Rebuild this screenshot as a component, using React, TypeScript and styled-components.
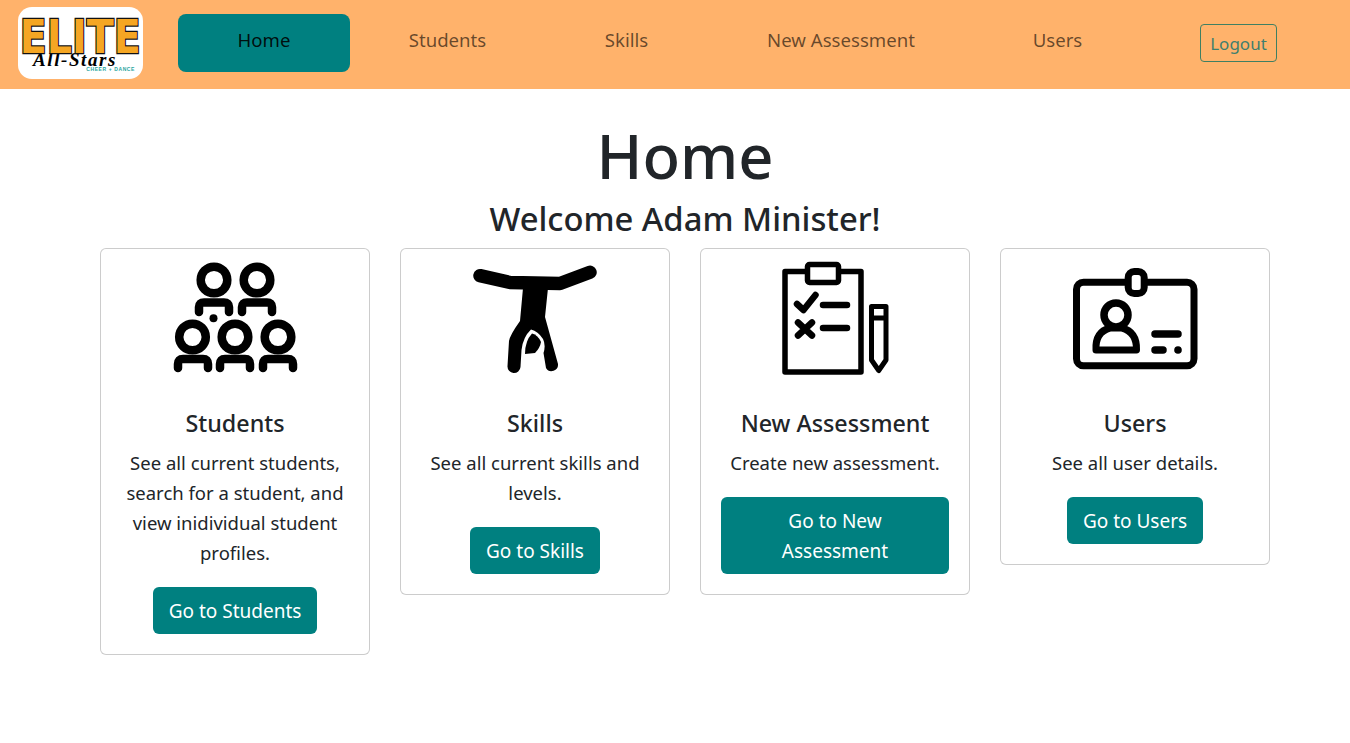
import styled, { createGlobalStyle } from "styled-components";

const GlobalStyle = createGlobalStyle`
  * {
    box-sizing: border-box;
  }

  html, body {
    margin: 0;
    background: #fff;
    font-family: "Noto Sans", "Open Sans", sans-serif;
    color: #212529;
    overflow-x: hidden;
  }
`;

const navLinks = [
  { id: 1, label: "Home", width: 172, active: true },
  { id: 2, label: "Students", width: 195 },
  { id: 3, label: "Skills", width: 163 },
  { id: 4, label: "New Assessment", width: 266 },
  { id: 5, label: "Users", width: 167 },
];

function StudentsIcon() {
  const heads = [[54, 25], [97, 25], [32.5, 82], [75, 82], [118, 82]];
  const bodies = [
    "M39 57V52Q39 47.500 44 47.500H64Q69 47.500 69 52V57",
    "M82 57V52Q82 47.500 87 47.500H107Q112 47.500 112 52V57",
    "M18 113V109Q18 104 23 104H43Q48 104 48 109V113",
    "M60 113V109Q60 104 65 104H85Q90 104 90 109V113",
    "M103 113V109Q103 104 108 104H128Q133 104 133 109V113",
  ];

  return (
    <svg width="150" height="125" viewBox="0 0 150 125" fill="none" stroke="#000" strokeWidth="8.500" strokeLinecap="round">
      {heads.map(([cx, cy]) => (
        <circle key={`${cx}-${cy}`} cx={cx} cy={cy} r="13.300" />
      ))}
      {bodies.map((d) => (
        <path key={d} d={d} />
      ))}
      <circle cx="53.500" cy="63.300" r="4" fill="#000" stroke="none" />
    </svg>
  );
}

function SkillsIcon() {
  return (
    <svg width="150" height="125" viewBox="0 0 150 125" fill="none" stroke="#000" strokeLinecap="round" strokeLinejoin="round">
      <path d="M20 20.700L50 27.500L100 28.500L130 17.300" strokeWidth="13.500" />
      <path
        d="M63 33H88L85 62L98 109A6.500 6.500 0 0 1 86 113L83.500 98Q86 90 83 84Q78 76 71 74.500Q63 82 61.500 95L60.500 112A6.500 6.500 0 0 1 47.500 111L49 86Q50 80 60 66Z"
        fill="#000"
        stroke="none"
      />
      <path d="M72 78.500Q78 80 81 87Q80 93 75 98L65 99Q65 86 72 78.500Z" fill="#000" stroke="none" />
    </svg>
  );
}

function AssessmentIcon() {
  return (
    <svg width="140" height="125" viewBox="0 0 140 125" fill="none" stroke="#000" strokeLinecap="round" strokeLinejoin="round">
      <rect x="20" y="16.500" width="76" height="100.500" strokeWidth="5.500" />
      <rect x="42.500" y="9.500" width="31" height="18" rx="2" fill="#fff" strokeWidth="5.500" />
      <path d="M32 49L38.500 55L50.500 40" strokeWidth="6.500" />
      <path d="M58 50H82M58 73H82M33 67.500L47 80.500M47 67.500L33 80.500" strokeWidth="6.500" />
      <path d="M106.500 51.500H121V105L113.750 115.500L106.500 105ZM106.500 63H121" strokeWidth="5" />
    </svg>
  );
}

function UsersIcon() {
  return (
    <svg width="150" height="125" viewBox="0 0 150 125" fill="none" stroke="#000" strokeLinecap="round" strokeLinejoin="round">
      <rect x="16.500" y="27.200" width="117.500" height="83.600" rx="7" strokeWidth="7" />
      <rect x="68.200" y="16.500" width="16" height="22" rx="6" fill="#fff" strokeWidth="7" />
      <circle cx="56" cy="60" r="12" strokeWidth="7.500" />
      <path d="M36 95Q35 77 50 73H62Q77 77 76.500 95Z" fill="#fff" strokeWidth="7" />
      <path d="M95 79H118M95 95H103" strokeWidth="7.500" />
      <circle cx="118" cy="95" r="3.800" fill="#000" stroke="none" />
    </svg>
  );
}

const cards = [
  {
    id: 1,
    title: "Students",
    text: "See all current students, search for a student, and view inidividual student profiles.",
    action: "Go to Students",
    icon: <StudentsIcon />,
  },
  {
    id: 2,
    title: "Skills",
    text: "See all current skills and levels.",
    action: "Go to Skills",
    icon: <SkillsIcon />,
  },
  {
    id: 3,
    title: "New Assessment",
    text: "Create new assessment.",
    action: "Go to New Assessment",
    icon: <AssessmentIcon />,
  },
  {
    id: 4,
    title: "Users",
    text: "See all user details.",
    action: "Go to Users",
    icon: <UsersIcon />,
  },
];

export default function App() {
  return (
    <>
      <GlobalStyle />
      <Navbar>
        <Logo>
          <LogoElite>ELITE</LogoElite>
          <LogoStars>All-Stars</LogoStars>
          <LogoTag>CHEER + DANCE</LogoTag>
        </Logo>
        <NavList>
          {navLinks.map((link) => (
            <NavLink key={link.id} $width={link.width} $active={link.active}>
              {link.label}
            </NavLink>
          ))}
        </NavList>
        <LogoutButton>Logout</LogoutButton>
      </Navbar>

      <Main>
        <Title>Home</Title>
        <Welcome>Welcome Adam Minister!</Welcome>
        <CardRow>
          {cards.map((card) => (
            <Card key={card.id}>
              <IconFrame>{card.icon}</IconFrame>
              <CardBody>
                <CardTitle>{card.title}</CardTitle>
                <CardText>{card.text}</CardText>
                <CardButton>{card.action}</CardButton>
              </CardBody>
            </Card>
          ))}
        </CardRow>
      </Main>
    </>
  );
}

const Navbar = styled.nav`
  height: 89px;
  padding: 7px 0 10px 18px;
  background: #ffb26b;

  display: flex;
  align-items: flex-start;
`;

const Logo = styled.div`
  width: 125px;
  height: 72px;
  padding-top: 12px;
  border-radius: 14px;
  background: #fff;
  overflow: hidden;

  display: flex;
  flex-direction: column;
  align-items: center;
`;

const LogoElite = styled.div`
  height: 35px;
  font-family: "DejaVu Sans", sans-serif;
  font-size: 46px;
  font-weight: 700;
  line-height: 36px;
  color: #f5a623;
  -webkit-text-stroke: 2.500px #111;
  paint-order: stroke fill;
  transform: scaleX(0.86);
`;

const LogoStars = styled.div`
  align-self: flex-start;
  height: 11px;
  margin-left: 15px;
  font-family: "Liberation Serif", serif;
  font-size: 19px;
  font-style: italic;
  font-weight: 700;
  line-height: 11px;
  letter-spacing: 1.600px;
  color: #000;
`;

const LogoTag = styled.div`
  align-self: flex-end;
  height: 5px;
  margin: 2px 8px 0 0;
  font-family: "Liberation Sans", sans-serif;
  font-size: 5px;
  font-weight: 700;
  letter-spacing: 0.600px;
  line-height: 5px;
  color: #2aa6a0;
`;

const NavList = styled.div`
  margin: 7px 0 0 35px;

  display: flex;
`;

const NavLink = styled.a<{ $width: number; $active?: boolean }>`
  width: ${(p) => p.$width}px;
  height: 58px;
  padding-bottom: 8px;
  border-radius: 8px;
  font-size: 18.600px;
  color: ${(p) => (p.$active ? "rgba(0, 0, 0, 0.9)" : "rgba(0, 0, 0, 0.6)")};
  background: ${(p) => (p.$active ? "#008080" : "transparent")};

  display: flex;
  align-items: center;
  justify-content: center;
`;

const LogoutButton = styled.button`
  width: 77px;
  height: 38px;
  margin: 17px 0 0 59px;
  padding: 0;
  border: 1px solid #3f7f62;
  border-radius: 4px;
  background: transparent;
  font-family: inherit;
  font-size: 17px;
  color: #3f7f6e;
`;

const Main = styled.main`
  padding: 0 0 0 20px;

  display: flex;
  flex-direction: column;
  align-items: center;
`;

const Title = styled.h1`
  margin: 28px 0 7px;
  font-size: 61.500px;
  font-weight: 500;
  line-height: 76px;
`;

const Welcome = styled.h2`
  margin: 0 0 10px;
  font-size: 32.800px;
  font-weight: 500;
  line-height: 38px;
`;

const CardRow = styled.div`
  display: flex;
  align-items: flex-start;
  gap: 30px;
`;

const Card = styled.div`
  width: 270px;
  border: 1px solid rgba(0, 0, 0, 0.2);
  border-radius: 6px;
  background: #fff;
`;

const IconFrame = styled.div`
  height: 140px;
  padding-top: 6px;

  display: flex;
  justify-content: center;
`;

const CardBody = styled.div`
  padding: 20px;
  text-align: center;
`;

const CardTitle = styled.h5`
  margin: 0 0 10px;
  font-size: 23.300px;
  font-weight: 500;
  line-height: 29px;
`;

const CardText = styled.p`
  margin: 0 0 19px;
  font-size: 18.500px;
  line-height: 30px;
`;

const CardButton = styled.button`
  padding: 8.500px 16px;
  border: none;
  border-radius: 6px;
  background: #008080;
  font-family: inherit;
  font-size: 19px;
  line-height: 30px;
  color: #fff;
`;
